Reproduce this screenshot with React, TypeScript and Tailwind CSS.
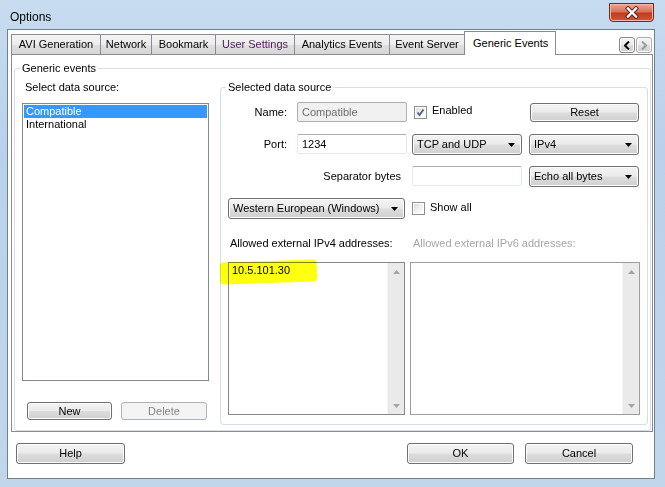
import React from 'react'

const btnFace =
  'flex items-center justify-center rounded-[3px] border border-[#707070] bg-[linear-gradient(to_bottom,#f3f3f3_0%,#ebebeb_48%,#dddddd_52%,#cfcfcf_100%)] shadow-[inset_0_0_0_1px_#fcfcfc]'

function Button({ label, className, disabled, primary }: { label: string; className: string; disabled?: boolean; primary?: boolean }) {
  if (disabled) {
    return (
      <div className={`flex items-center justify-center rounded-[3px] border border-[#adb2b5] bg-[#f4f4f4] text-[#838383] ${className}`}>
        {label}
      </div>
    )
  }
  return (
    <div
      className={`${btnFace} ${className} ${primary ? 'border-[#3c7fb1] shadow-[inset_0_0_0_1px_#b6e3f7]' : ''}`}
    >
      {label}
    </div>
  )
}

function Combo({ label, className }: { label: string; className: string }) {
  return (
    <div className={`${btnFace} justify-between! pl-[4px] pr-[6px] ${className}`}>
      <span>{label}</span>
      <svg width="7" height="4" viewBox="0 0 7 4">
        <polygon points="0,0 7,0 3.5,4" fill="#000" />
      </svg>
    </div>
  )
}

function TextField({ value, className, disabled }: { value?: string; className: string; disabled?: boolean }) {
  return (
    <div
      className={`flex items-center rounded-[2px] border pl-[4px] ${
        disabled
          ? 'border-[#afafaf] bg-[#f0f0f0] text-[#6d6d6d]'
          : 'border-[#e3e9ef] border-t-[#abadb3] bg-white'
      } ${className}`}
    >
      {value}
    </div>
  )
}

function CheckBox({ checked, className }: { checked?: boolean; className?: string }) {
  return (
    <div className={`h-[13px] w-[13px] shrink-0 border border-[#8e8f8f] bg-white p-px ${className ?? ''}`}>
      <div className="relative h-full w-full bg-[linear-gradient(135deg,#dcdcdc_0%,#f4f4f4_60%,#ffffff_100%)]">
        {checked && (
          <svg width="11" height="11" viewBox="0 0 11 11" className="absolute -left-px -top-px">
            <path d="M2.5 5.5 L4.5 8 L8.5 2.5" stroke="#4a5f82" strokeWidth="1.8" fill="none" />
          </svg>
        )}
      </div>
    </div>
  )
}

function ScrollBar() {
  return (
    <div className="flex w-[17px] shrink-0 flex-col justify-between border-l border-[#f5f5f5] bg-[#eaeaea]">
      <div className="flex h-[17px] items-center justify-center">
        <svg width="7" height="4" viewBox="0 0 7 4">
          <polygon points="0,4 7,4 3.5,0" fill="#a3a3a3" />
        </svg>
      </div>
      <div className="flex h-[17px] items-center justify-center">
        <svg width="7" height="4" viewBox="0 0 7 4">
          <polygon points="0,0 7,0 3.5,4" fill="#a3a3a3" />
        </svg>
      </div>
    </div>
  )
}

const tabs = [
  { label: 'AVI Generation', w: 'w-[90px]' },
  { label: 'Network', w: 'w-[52px]' },
  { label: 'Bookmark', w: 'w-[65px]' },
  { label: 'User Settings', w: 'w-[80px]', color: 'text-[#4a1a5a]' },
  { label: 'Analytics Events', w: 'w-[96px]' },
  { label: 'Event Server', w: 'w-[76px]' },
]

export default function App() {
  return (
    <div className="flex h-[487px] w-[665px] flex-col overflow-hidden bg-[linear-gradient(to_bottom,#c8dcf0_0%,#b9d1ea_30%,#c2d6eb_100%)] font-['Liberation_Sans',Arial,sans-serif] text-[11px] leading-[13px] text-black">
      {/* title bar */}
      <div className="flex h-[29px] shrink-0 items-start pl-[10px] pr-[11px]">
        <span className="mt-[9px] text-[12px] leading-[16px]">Options</span>
        <div className="ml-auto mt-[3px] flex h-[19px] w-[45px] items-center justify-center rounded-b-[4px] border border-[#6b2a1c] bg-[linear-gradient(to_bottom,#eba797_0%,#d8735a_45%,#c23a20_55%,#cf5a38_100%)] shadow-[inset_0_0_0_1px_#f0b7a8]">
          <svg width="16" height="13" viewBox="0 0 16 13">
            <path d="M4 2.5 L12 10.5 M12 2.5 L4 10.5" stroke="#5a2016" strokeWidth="4.2" strokeLinecap="square" />
            <path d="M4 2.5 L12 10.5 M12 2.5 L4 10.5" stroke="#ffffff" strokeWidth="2.4" strokeLinecap="square" />
          </svg>
        </div>
      </div>

      {/* client area */}
      <div className="ml-[7px] mr-[10px] flex h-[450px] shrink-0 flex-col border border-[#6f8092] bg-white">
        {/* tab strip */}
        <div className="flex h-[24px] shrink-0 items-end pl-[3px] pr-[2px]">
          {tabs.map((t) => (
            <div
              key={t.label}
              className={`flex h-[20px] items-center justify-center border border-b-0 border-[#898c95] bg-[linear-gradient(to_bottom,#f4f4f4_0%,#ececec_50%,#e0e0e0_51%,#d6d6d6_100%)] -ml-px first:ml-0 ${t.w} ${t.color ?? ''}`}
            >
              {t.label}
            </div>
          ))}
          <div className="relative z-10 -mb-px flex h-[24px] w-[92px] items-start border border-b-0 border-[#898c95] bg-white pl-[8px] pt-[5px] -ml-px">
            Generic Events
          </div>
          <div className="mb-px ml-auto flex gap-px">
            <div className={`${btnFace} h-[16px] w-[16px] rounded-[2px] border-[#868686]`}>
              <svg width="6" height="9" viewBox="0 0 6 9">
                <path d="M5 0.5 L1 4.5 L5 8.5" stroke="#000" strokeWidth="2" fill="none" />
              </svg>
            </div>
            <div className={`${btnFace} h-[16px] w-[16px] rounded-[2px] border-[#a8a8a8]`}>
              <svg width="6" height="9" viewBox="0 0 6 9">
                <path d="M1 0.5 L5 4.5 L1 8.5" stroke="#9a9a9a" strokeWidth="2" fill="none" />
              </svg>
            </div>
          </div>
        </div>

        {/* tab page */}
        <div className="ml-[3px] mr-px h-[378px] shrink-0 border border-[#898c95] bg-white">
          <fieldset className="ml-[2px] mt-[7px] h-[369px] w-[637px] rounded-[3px] border border-[#d5dfe5]">
            <legend className="ml-[5px] px-[2px] leading-[13px]">Generic events</legend>
            <div className="flex items-start">
              {/* left column */}
              <div className="ml-[7px] flex w-[187px] flex-col">
                <span className="pl-[3px] pt-[6px]">Select data source:</span>
                <div className="mt-[9px] flex h-[278px] flex-col border border-[#828790] bg-white p-px">
                  <div className="bg-[#3399ff] pl-[2px] text-white">Compatible</div>
                  <div className="pl-[2px]">International</div>
                </div>
                <div className="mt-[21px] flex">
                  <Button label="New" className="ml-[5px] h-[18px] w-[85px]" />
                  <Button label="Delete" disabled className="ml-[9px] h-[18px] w-[86px]" />
                </div>
              </div>

              {/* right group */}
              <fieldset className="ml-[11px] mt-[6px] h-[344px] w-[428px] rounded-[3px] border border-[#d5dfe5]">
                <legend className="ml-[5px] px-[2px] leading-[13px]">Selected data source</legend>
                <div className="flex flex-col">
                  <div className="mt-[8px] flex h-[20px] items-center pr-[8px]">
                    <span className="w-[66px] text-right">Name:</span>
                    <TextField value="Compatible" disabled className="ml-[10px] h-[20px] w-[110px]" />
                    <CheckBox checked className="ml-[7px]" />
                    <span className="mb-[3px] ml-[5px]">Enabled</span>
                    <Button label="Reset" className="ml-auto h-[19px] w-[109px]" />
                  </div>

                  <div className="mt-[12px] flex h-[21px] items-center">
                    <span className="w-[66px] text-right">Port:</span>
                    <TextField value="1234" className="ml-[10px] h-[20px] w-[110px] self-start" />
                    <Combo label="TCP and UDP" className="ml-[5px] h-[21px] w-[110px]" />
                    <Combo label="IPv4" className="ml-[7px] h-[21px] w-[110px]" />
                  </div>

                  <div className="mt-[11px] flex h-[21px] items-center">
                    <span className="w-[180px] text-right">Separator bytes</span>
                    <TextField className="ml-[11px] h-[20px] w-[110px] self-start" />
                    <Combo label="Echo all bytes" className="ml-[7px] h-[21px] w-[110px]" />
                  </div>

                  <div className="mt-[11px] flex h-[21px] items-center">
                    <Combo label="Western European (Windows)" className="ml-[7px] h-[21px] w-[177px]" />
                    <CheckBox className="ml-[7px]" />
                    <span className="mb-[3px] ml-[5px]">Show all</span>
                  </div>

                  <div className="mt-[18px] flex">
                    <span className="ml-[9px] w-[183px]">Allowed external IPv4 addresses:</span>
                    <span className="text-[#a6a6a6]">Allowed external IPv6 addresses:</span>
                  </div>

                  <div className="mt-[12px] flex">
                    <div className="relative ml-[7px] flex h-[153px] w-[177px] border border-[#828790] bg-white">
                      <div className="flex-1 pl-[3px] pt-px">10.5.101.30</div>
                      <ScrollBar />
                      <span className="pointer-events-none absolute -left-[9px] -top-[2px] h-[22px] w-[97px] -rotate-2 rounded-[4px] bg-[#ffff10] mix-blend-multiply" />
                    </div>
                    <div className="ml-[5px] flex h-[153px] w-[230px] border border-[#9c9c9c] bg-white">
                      <div className="flex-1" />
                      <ScrollBar />
                    </div>
                  </div>
                </div>
              </fieldset>
            </div>
          </fieldset>
        </div>

        {/* dialog buttons */}
        <div className="mt-[11px] flex">
          <Button label="Help" className="ml-[8px] h-[21px] w-[109px]" />
          <Button label="OK" primary className="ml-auto h-[21px] w-[107px]" />
          <Button label="Cancel" className="ml-[11px] mr-[21px] h-[21px] w-[108px]" />
        </div>
      </div>
    </div>
  )
}
